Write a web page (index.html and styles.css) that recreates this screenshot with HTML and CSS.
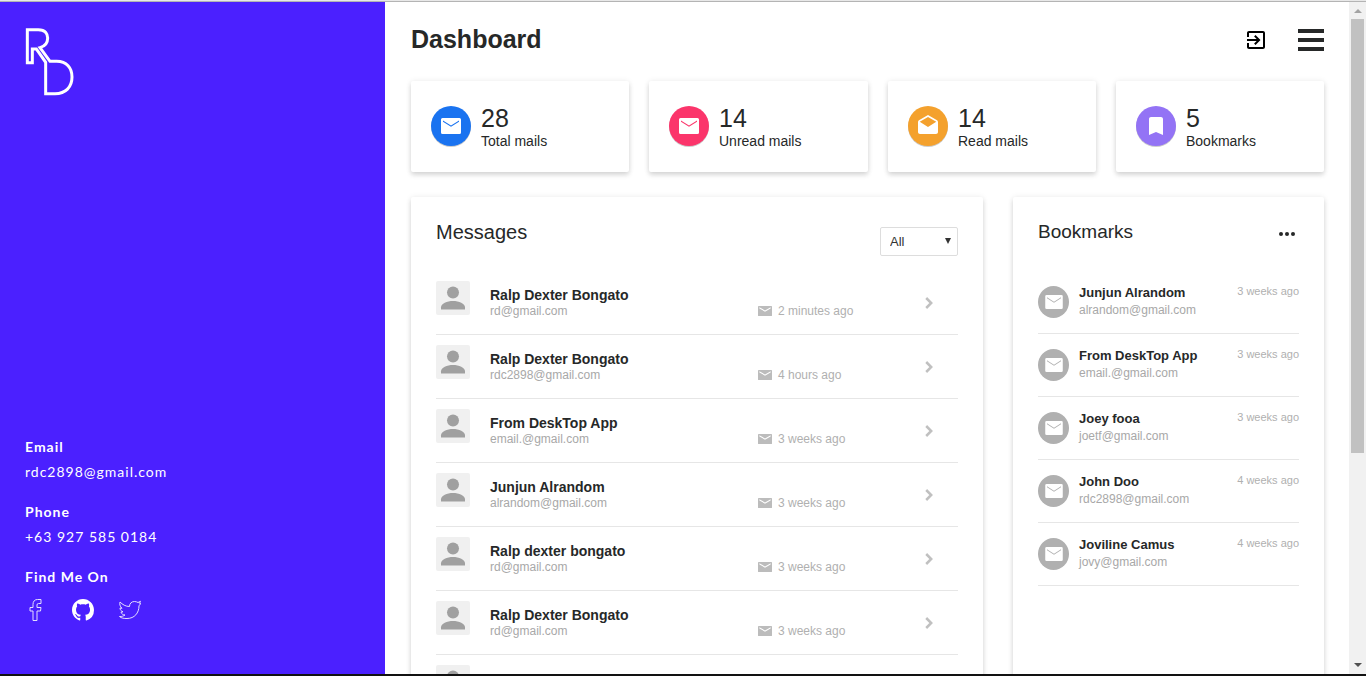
FILE: index.html
```html
<!DOCTYPE html>
<html lang="en">
<head>
<meta charset="utf-8">
<title>Dashboard</title>
<link rel="stylesheet" href="styles.css">
</head>
<body>
<svg class="sprite" aria-hidden="true">
  <symbol id="mail" viewBox="2 4 20 16" preserveAspectRatio="none"><path d="M21 4H3c-.6 0-1 .4-1 1v14c0 .6.400 1 1 1h18c.6 0 1-.4 1-1V5c0-.6-.4-1-1-1zm-1 4l-8 5-8-5V6l8 5 8-5v2z"/></symbol>
  <symbol id="envelope" viewBox="0 0 20 16"><path fill-rule="evenodd" d="M1.500 0h17A1.500 1.500 0 0 1 20 1.500v13a1.500 1.500 0 0 1-1.500 1.500h-17A1.500 1.500 0 0 1 0 14.500v-13A1.500 1.500 0 0 1 1.500 0zM2 2.600v1.200l8 5 8-5V2.600l-8 5z"/></symbol>
  <symbol id="drafts" viewBox="0 0 24 24"><path d="M21.990 8c0-.72-.37-1.350-.94-1.700L12 1 2.950 6.300C2.380 6.650 2 7.280 2 8v10c0 1.100.9 2 2 2h16c1.100 0 2-.9 2-2l-.01-10zM12 13L3.740 7.840 12 3l8.260 4.840L12 13z"/></symbol>
  <symbol id="bookmark" viewBox="0 0 24 24"><path d="M17 3H7c-1.100 0-1.990.9-1.990 2L5 21l7-3 7 3V5c0-1.100-.9-2-2-2z"/></symbol>
  <symbol id="person" viewBox="0 0 34 34"><circle cx="17" cy="11.500" r="6"/><path d="M5 28.500v-2c0-4 6-6.500 12-6.500s12 2.500 12 6.500v2z"/></symbol>
  <symbol id="chevron" viewBox="0 0 8 12"><path d="M1.200 1l5 5-5 5" fill="none" stroke="currentColor" stroke-width="2.500"/></symbol>
</svg>
<div class="window">
  <div class="viewport">
    <aside class="sidebar">
      <svg class="logo" viewBox="75 80 150 210" role="img" aria-label="RD"><path d="M82 88H115C137 88 143 102 143 113C143 128 134 138 120 142L150 183H170C200 183 216 203 216 230C216 260 197 280 165 280H137V186L109 146H97V187H82Z"/></svg>
      <div class="contact">
        <h2>Email</h2>
        <p>rdc2898@gmail.com</p>
        <h2>Phone</h2>
        <p>+63 927 585 0184</p>
        <h2>Find Me On</h2>
        <nav class="social">
          <a href="#facebook" aria-label="Facebook"><svg viewBox="0 0 22 22"><path class="line" d="M8 21.500V12H5V8.500H8V5.500C8 2.500 9.500.5 12.500.5H16V4.500H13.500Q12 4.500 12 6V8.500H16L15.500 12H12V21.500Z"/></svg></a>
          <a href="#github" aria-label="GitHub"><svg viewBox="0 0 16 16"><path d="M8 0C3.580 0 0 3.580 0 8c0 3.540 2.290 6.530 5.470 7.590.4.070.55-.17.55-.38 0-.19-.01-.82-.01-1.490-2.010.37-2.530-.49-2.690-.94-.09-.23-.48-.94-.82-1.130-.28-.15-.68-.52-.01-.53.63-.01 1.080.58 1.230.82.72 1.210 1.870.87 2.330.66.070-.52.28-.87.51-1.070-1.780-.2-3.640-.89-3.640-3.950 0-.87.31-1.590.82-2.150-.08-.2-.36-1.020.08-2.120 0 0 .67-.21 2.200.82.64-.18 1.320-.27 2-.27s1.360.09 2 .27c1.530-1.040 2.200-.82 2.200-.82.44 1.100.16 1.920.08 2.120.51.56.82 1.270.82 2.150 0 3.070-1.870 3.750-3.650 3.950.29.25.54.73.54 1.480 0 1.070-.01 1.930-.01 2.200 0 .21.15.46.55.38A8.010 8.010 0 0 0 16 8c0-4.420-3.580-8-8-8z"/></svg></a>
          <a href="#twitter" aria-label="Twitter"><svg viewBox="0 0 22 22"><path class="line" d="M1 3C3.500 5.500 6.500 7.500 10.500 7.500C10.500 4.500 12.500 2.500 15.500 2.500C17 2.500 18 3 19 3.500L21.500 2.300L20.500 4.300L21.800 4.500L20 6.800C20 14 15.500 19.500 8 19.500C5 19.500 2.500 19.300.5 17.500C3 17.700 4.500 17 6 16C4 15.800 2.500 15 2 13.200L4 12.800C2 12 1 10.800 1 9L3 9.300C1 7.500.3 5 1 3Z"/></svg></a>
        </nav>
      </div>
    </aside>

    <main class="main">
      <header class="topbar">
        <h1>Dashboard</h1>
        <div class="actions">
          <button type="button" aria-label="Log out"><svg class="exit" viewBox="0 0 24 24"><path d="M10.090 15.590L11.500 17l5-5-5-5-1.410 1.410L12.670 11H3v2h9.670l-2.580 2.590zM19 3H5c-1.110 0-2 .9-2 2v4h2V5h14v14H5v-4H3v4c0 1.100.89 2 2 2h14c1.100 0 2-.9 2-2V5c0-1.100-.9-2-2-2z"/></svg></button>
          <button type="button" class="burger" aria-label="Menu"><span></span><span></span><span></span></button>
        </div>
      </header>

      <section class="stats">
        <div class="card stat"><span class="disc blue"><svg class="env"><use href="#envelope"/></svg></span><div><strong>28</strong><p>Total mails</p></div></div>
        <div class="card stat"><span class="disc pink"><svg class="env"><use href="#envelope"/></svg></span><div><strong>14</strong><p>Unread mails</p></div></div>
        <div class="card stat"><span class="disc orange"><svg><use href="#drafts"/></svg></span><div><strong>14</strong><p>Read mails</p></div></div>
        <div class="card stat"><span class="disc violet"><svg><use href="#bookmark"/></svg></span><div><strong>5</strong><p>Bookmarks</p></div></div>
      </section>

      <div class="panels">
        <section class="card panel">
          <div class="panel-head">
            <h2>Messages</h2>
            <div class="filter">
              <select aria-label="Filter messages"><option>All</option></select>
              <svg viewBox="0 0 6 6"><path d="M0 0h6L3 6z"/></svg>
            </div>
          </div>
          <ul class="messages">
            <li><svg class="avatar"><use href="#person"/></svg><div><h3>Ralp Dexter Bongato</h3><p>rd@gmail.com</p></div><span class="when"><svg><use href="#mail"/></svg>2 minutes ago</span><a href="#m1" aria-label="Open"><svg><use href="#chevron"/></svg></a></li>
            <li><svg class="avatar"><use href="#person"/></svg><div><h3>Ralp Dexter Bongato</h3><p>rdc2898@gmail.com</p></div><span class="when"><svg><use href="#mail"/></svg>4 hours ago</span><a href="#m2" aria-label="Open"><svg><use href="#chevron"/></svg></a></li>
            <li><svg class="avatar"><use href="#person"/></svg><div><h3>From DeskTop App</h3><p>email.@gmail.com</p></div><span class="when"><svg><use href="#mail"/></svg>3 weeks ago</span><a href="#m3" aria-label="Open"><svg><use href="#chevron"/></svg></a></li>
            <li><svg class="avatar"><use href="#person"/></svg><div><h3>Junjun Alrandom</h3><p>alrandom@gmail.com</p></div><span class="when"><svg><use href="#mail"/></svg>3 weeks ago</span><a href="#m4" aria-label="Open"><svg><use href="#chevron"/></svg></a></li>
            <li><svg class="avatar"><use href="#person"/></svg><div><h3>Ralp dexter bongato</h3><p>rd@gmail.com</p></div><span class="when"><svg><use href="#mail"/></svg>3 weeks ago</span><a href="#m5" aria-label="Open"><svg><use href="#chevron"/></svg></a></li>
            <li><svg class="avatar"><use href="#person"/></svg><div><h3>Ralp Dexter Bongato</h3><p>rd@gmail.com</p></div><span class="when"><svg><use href="#mail"/></svg>3 weeks ago</span><a href="#m6" aria-label="Open"><svg><use href="#chevron"/></svg></a></li>
            <li><svg class="avatar"><use href="#person"/></svg></li>
          </ul>
        </section>

        <section class="card panel">
          <div class="panel-head">
            <h2 class="small">Bookmarks</h2>
            <button type="button" class="more" aria-label="More"><svg viewBox="0 0 18 6"><circle cx="3" cy="3" r="2"/><circle cx="9" cy="3" r="2"/><circle cx="15" cy="3" r="2"/></svg></button>
          </div>
          <ul class="bookmarks">
            <li><span class="disc grey"><svg class="env"><use href="#envelope"/></svg></span><div><h3>Junjun Alrandom</h3><p>alrandom@gmail.com</p></div><time>3 weeks ago</time></li>
            <li><span class="disc grey"><svg class="env"><use href="#envelope"/></svg></span><div><h3>From DeskTop App</h3><p>email.@gmail.com</p></div><time>3 weeks ago</time></li>
            <li><span class="disc grey"><svg class="env"><use href="#envelope"/></svg></span><div><h3>Joey fooa</h3><p>joetf@gmail.com</p></div><time>3 weeks ago</time></li>
            <li><span class="disc grey"><svg class="env"><use href="#envelope"/></svg></span><div><h3>John Doo</h3><p>rdc2898@gmail.com</p></div><time>4 weeks ago</time></li>
            <li><span class="disc grey"><svg class="env"><use href="#envelope"/></svg></span><div><h3>Joviline Camus</h3><p>jovy@gmail.com</p></div><time>4 weeks ago</time></li>
          </ul>
        </section>
      </div>
    </main>

    <div class="scrollbar" aria-hidden="true">
      <svg class="up" viewBox="0 0 8 4"><path d="M0 4L4 0l4 4z"/></svg>
      <div class="track"><div class="thumb"></div></div>
      <svg class="down" viewBox="0 0 8 4"><path d="M0 0h8L4 4z"/></svg>
    </div>
  </div>
</div>
</body>
</html>
```
FILE: styles.css
```css
* { box-sizing: border-box; margin: 0; padding: 0; }
body { font-family: "Liberation Sans", Arial, sans-serif; color: #262828; background: #fff; }
ul { list-style: none; }
svg { display: block; fill: currentColor; }
button { background: none; border: 0; color: inherit; cursor: pointer; }
.sprite { display: none; }

.window {
  display: flex;
  height: 100vh;
  border-top: 1px solid #e8e8e8;
  border-bottom: 2px solid #121212;
  overflow: hidden;
}
.viewport { display: flex; flex: 1; min-width: 0; border-top: 1px solid #b4b4b4; overflow: hidden; }

.sidebar {
  flex: 0 0 385px;
  display: flex;
  flex-direction: column;
  justify-content: space-between;
  padding: 25px 25px 53px;
  background: #4b20ff;
  color: #fff;
}
.logo { width: 50px; height: 70px; }
.logo path { fill: none; stroke: #fff; stroke-width: 9; }
.contact { font-family: Lato, sans-serif; font-size: 14px; line-height: 20px; letter-spacing: 1px; }
.contact h2 { font-size: 14px; font-weight: 700; margin-bottom: 5px; }
.contact p { margin-bottom: 20px; }
.social { display: flex; gap: 25px; padding-top: 7px; }
.social a { color: #fff; }
.social svg { width: 22px; height: 22px; }
.social .line { fill: none; stroke: #e4deff; stroke-width: 1; }

.main { flex: 1; min-width: 0; padding: 0 25px 0 26px; }
.topbar { display: flex; justify-content: space-between; align-items: center; height: 79px; padding-bottom: 3px; }
.topbar h1 { padding-bottom: 2px; font-size: 25px; line-height: 28px; }
.actions { display: flex; align-items: center; gap: 30px; }
.exit { width: 24px; height: 24px; color: #000; }
.burger { display: grid; gap: 5px; width: 26px; }
.burger span { height: 4px; background: #262828; }

.card { background: #fff; border-radius: 2px; box-shadow: 0 3px 5px rgba(0, 0, 0, .14), 0 0 6px rgba(0, 0, 0, .07); }
.stats { display: grid; grid-template-columns: 218fr 219fr 208fr 208fr; gap: 20px; }
.stat { display: flex; align-items: flex-start; gap: 10px; padding: 25px 20px 20px; }
.stat strong { display: block; font-size: 25px; font-weight: 400; line-height: 24px; }
.stat p { font-size: 14px; line-height: 22px; }
.disc {
  display: grid;
  place-items: center;
  width: 40px;
  height: 40px;
  border-radius: 50%;
  color: #fff;
  box-shadow: 0 1px 0 rgba(0, 0, 0, .2);
}
.disc svg { width: 24px; height: 24px; }
.disc .env { width: 20px; height: 16px; }
.blue { background: #1a73f0; }
.pink { background: #fb356b; }
.orange { background: #f4a12d; }
.violet { background: #9373f5; }

.panels { display: grid; grid-template-columns: 572fr 311fr; gap: 30px; margin-top: 25px; }
.panel { padding: 24px 25px 0; min-height: 500px; }
.panel-head { display: flex; justify-content: space-between; height: 35px; margin-bottom: 15px; }
.panel-head h2 { font-size: 20px; font-weight: 400; line-height: 22px; }
.panel-head .small { font-size: 19px; }
.filter { position: relative; align-self: flex-end; }
.filter select {
  appearance: none;
  display: block;
  width: 78px;
  height: 29px;
  padding: 0 9px;
  border: 1px solid #ddd;
  border-radius: 2px;
  background: #fff;
  color: #333;
  font: 13px "Liberation Sans", Arial, sans-serif;
}
.filter svg { position: absolute; right: 7px; top: 11px; width: 6px; height: 6px; color: #333; pointer-events: none; }
.more { align-self: flex-start; padding: 10px 3px; }
.more svg { width: 18px; height: 6px; }

.messages li {
  display: grid;
  grid-template-columns: 34px 248fr 147fr 33px;
  column-gap: 20px;
  align-items: end;
  height: 64px;
  padding: 10px 0 15px;
  border-bottom: 1px solid #e6e6e6;
}
.avatar { align-self: start; width: 34px; height: 34px; background: #f0f0f0; border-radius: 2px; color: #a0a0a0; }
.messages h3 { font-size: 14px; line-height: 16px; }
.messages p { font-size: 12px; line-height: 16px; color: #a8a8a8; }
.when { display: flex; align-items: center; gap: 6px; font-size: 12px; line-height: 16px; color: #b0b0b0; }
.when svg { width: 14px; height: 10px; color: #bcbcbc; }
.messages a { color: #c0c0c0; padding-bottom: 10px; }
.messages a svg { width: 8px; height: 12px; }

.bookmarks li {
  display: grid;
  grid-template-columns: 31px 1fr auto;
  column-gap: 10px;
  align-items: center;
  height: 63px;
  padding: 13px 0 14px;
  border-bottom: 1px solid #e6e6e6;
}
.bookmarks h3 { font-size: 13px; line-height: 18px; }
.bookmarks p { font-size: 12px; line-height: 17px; color: #a8a8a8; }
.bookmarks time { align-self: start; font-size: 11px; line-height: 14px; color: #b0b0b0; }
.grey { width: 31px; height: 32px; background: #b0b0b0; box-shadow: none; }
.grey .env { width: 18px; height: 14px; }

.scrollbar {
  flex: 0 0 17px;
  display: flex;
  flex-direction: column;
  align-items: center;
  padding: 7px 0;
  background: #f1f1f1;
}
.scrollbar svg { width: 8px; height: 4px; }
.up { color: #a3a3a3; }
.down { color: #505050; }
.track { flex: 1; width: 13px; padding: 6px 0; }
.thumb { height: 68%; background: #c1c1c1; }
```
